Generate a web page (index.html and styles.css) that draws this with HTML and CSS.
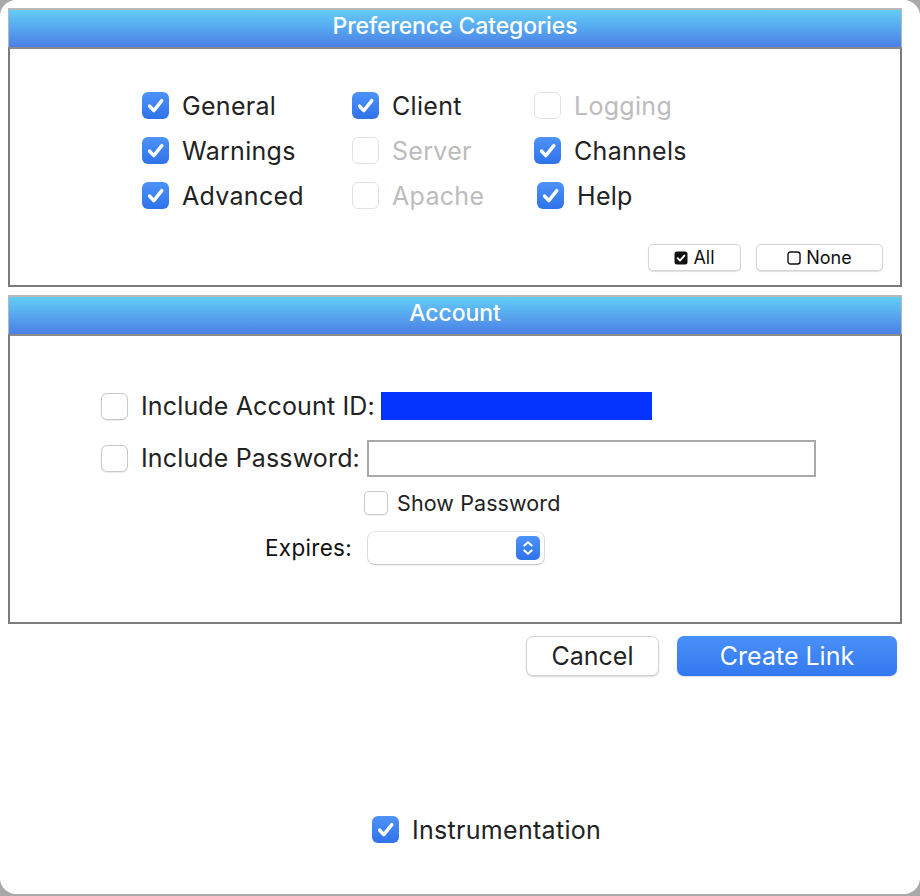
FILE: index.html
```html
<!DOCTYPE html>
<html>
<head>
<meta charset="utf-8">
<link rel="stylesheet" href="styles.css">
</head>
<body>
<div class="window">
  <section class="panel panel-prefs">
    <div class="panel-head">Preference Categories</div>
    <div class="panel-body prefs-body">
      <div class="cat-grid">
        <label class="cb"><span class="box on"><svg viewBox="0 0 27 27"><path d="M7.5 14 L11.8 18.6 L19.8 8.6"/></svg></span>General</label>
        <label class="cb"><span class="box on"><svg viewBox="0 0 27 27"><path d="M7.5 14 L11.8 18.6 L19.8 8.6"/></svg></span>Client</label>
        <label class="cb dis"><span class="box off"></span>Logging</label>
        <label class="cb"><span class="box on"><svg viewBox="0 0 27 27"><path d="M7.5 14 L11.8 18.6 L19.8 8.6"/></svg></span>Warnings</label>
        <label class="cb dis"><span class="box off"></span>Server</label>
        <label class="cb"><span class="box on"><svg viewBox="0 0 27 27"><path d="M7.5 14 L11.8 18.6 L19.8 8.6"/></svg></span>Channels</label>
        <label class="cb"><span class="box on"><svg viewBox="0 0 27 27"><path d="M7.5 14 L11.8 18.6 L19.8 8.6"/></svg></span>Advanced</label>
        <label class="cb dis"><span class="box off"></span>Apache</label>
        <label class="cb shift"><span class="box on"><svg viewBox="0 0 27 27"><path d="M7.5 14 L11.8 18.6 L19.8 8.6"/></svg></span>Help</label>
      </div>
      <div class="sel-buttons">
        <button class="small-btn btn-all"><svg class="mini" viewBox="0 0 14 14"><rect x="0.5" y="0.5" width="13" height="13" rx="2.5" fill="#111"/><path d="M3.6 7.2 L6 9.6 L10.4 4.6" fill="none" stroke="#fff" stroke-width="1.9" stroke-linecap="round" stroke-linejoin="round"/></svg>All</button>
        <button class="small-btn btn-none"><svg class="mini" viewBox="0 0 14 14"><rect x="1" y="1" width="12" height="12" rx="2.5" fill="none" stroke="#111" stroke-width="1.4"/></svg>None</button>
      </div>
    </div>
  </section>

  <section class="panel panel-account">
    <div class="panel-head">Account</div>
    <div class="panel-body account-body">
      <div class="row row-id">
        <span class="box off2"></span>
        <span class="acc-label">Include Account ID:</span>
        <span class="id-field"></span>
      </div>
      <div class="row row-pw">
        <span class="box off2"></span>
        <span class="acc-label">Include Password:</span>
        <span class="pw-field"></span>
      </div>
      <div class="row row-show">
        <span class="box small off2"></span>
        <span class="show-label">Show Password</span>
      </div>
      <div class="row row-exp">
        <span class="exp-label">Expires:</span>
        <span class="select">
          <span class="stepper"><svg viewBox="0 0 24 24"><path d="M8.3 9.6 L12 6.2 L15.7 9.6 M8.3 14.4 L12 17.8 L15.7 14.4" fill="none" stroke="#fff" stroke-width="2" stroke-linecap="round" stroke-linejoin="round"/></svg></span>
        </span>
      </div>
    </div>
  </section>

  <div class="actions">
    <button class="btn btn-cancel">Cancel</button>
    <button class="btn btn-primary">Create Link</button>
  </div>

  <div class="instr">
    <label class="cb"><span class="box on"><svg viewBox="0 0 27 27"><path d="M7.5 14 L11.8 18.6 L19.8 8.6"/></svg></span>Instrumentation</label>
  </div>
</div>
</body>
</html>
```

FILE: styles.css
```css
html, body {
  margin: 0;
  padding: 0;
  background: #a9a9a9;
}
body {
  width: 920px;
  height: 896px;
  overflow: hidden;
  font-family: Inter, "Liberation Sans", sans-serif;
  color: #222;
}
.window {
  width: 920px;
  height: 894px;
  background: #fff;
  border-radius: 16px;
  padding-top: 8px;
  box-sizing: border-box;
  display: flex;
  flex-direction: column;
}
.panel {
  margin-left: 8px;
  width: 894px;
  box-sizing: border-box;
}
.panel-head {
  height: 39px;
  box-sizing: border-box;
  border-top: 2px solid #b8b8b8;
  border-left: 1px solid #b8b8b8;
  border-right: 1px solid #b8b8b8;
  background: linear-gradient(#62cdf8, #4b7fe6);
  color: #fff;
  font-size: 23px;
  font-weight: 500;
  text-align: center;
  line-height: 33px;
  letter-spacing: -0.1px;
}
.panel-body {
  border: 2px solid #7c7c7c;
  border-top: 2px solid #8a8a8a;
  background: #fff;
}
.prefs-body {
  height: 240px;
  box-sizing: border-box;
  padding-top: 43px;
  position: relative;
}
.cat-grid {
  display: grid;
  grid-template-columns: 210px 182px 200px;
  grid-auto-rows: 45px;
  margin-left: 132px;
}
.cb {
  display: flex;
  align-items: center;
  gap: 13px;
  font-size: 25px;
  letter-spacing: 0.3px;
  height: 27px;
  color: #222;
}
.cb.dis { color: #bcbcbc; }
.cb.shift { margin-left: 3px; }
.box {
  width: 27px;
  height: 27px;
  border-radius: 6px;
  box-sizing: border-box;
  flex: none;
  display: inline-block;
}
.box svg { width: 27px; height: 27px; display: block; }
.box svg path {
  fill: none;
  stroke: #fff;
  stroke-width: 3.4;
  stroke-linecap: round;
  stroke-linejoin: round;
}
.box.on {
  background: linear-gradient(#4d93f8, #2f72ea);
}
.box.off {
  border: 1px solid #e2e2e2;
  background: #fff;
}
.box.off2 {
  border: 1px solid #c9c9c9;
  background: #fff;
  box-shadow: 0 0.5px 1px rgba(0,0,0,0.08);
}
.box.small {
  width: 24px;
  height: 24px;
  border-radius: 5px;
}
.sel-buttons {
  position: absolute;
  right: 17px;
  bottom: 14px;
  display: flex;
  gap: 15px;
}
.small-btn {
  height: 27px;
  box-sizing: border-box;
  border: 1px solid #d4d4d4;
  border-radius: 5px;
  background: #fff;
  box-shadow: 0 1px 1px rgba(0,0,0,0.12);
  font-family: Inter, "Liberation Sans", sans-serif;
  font-size: 18px;
  color: #111;
  display: flex;
  align-items: center;
  justify-content: center;
  gap: 5px;
  padding: 0;
}
.btn-all { width: 93px; }
.btn-none { width: 127px; }
.mini { width: 14px; height: 14px; }

.panel-account { margin-top: 8px; }
.account-body {
  height: 290px;
  box-sizing: border-box;
  padding-top: 55px;
}
.row {
  display: flex;
  align-items: center;
}
.acc-label { font-size: 25px; letter-spacing: 0.15px; color: #222; }
.row-id { margin-left: 91px; height: 30px; }
.row-id .acc-label { margin-left: 13px; }
.id-field {
  width: 271px;
  height: 28px;
  background: #0433ff;
  margin-left: 6px;
}
.row-pw { margin-left: 91px; margin-top: 18px; height: 38px; }
.row-pw .acc-label { margin-left: 13px; }
.pw-field {
  width: 449px;
  height: 37px;
  box-sizing: border-box;
  border: 2px solid #a9a9a9;
  margin-left: 7px;
  background: #fff;
}
.row-show { margin-left: 354px; margin-top: 13px; height: 26px; }
.show-label { font-size: 21.5px; letter-spacing: 0.1px; margin-left: 9px; color: #222; }
.row-exp { margin-left: 255px; margin-top: 15px; height: 33px; }
.exp-label { font-size: 22.5px; letter-spacing: 0.3px; width: 98px; color: #111; }
.select {
  margin-left: 5px;
  width: 176px;
  height: 32px;
  box-sizing: border-box;
  border-radius: 6px;
  background: #fff;
  box-shadow: 0 0 0 0.5px rgba(0,0,0,0.18), 0 1px 2px rgba(0,0,0,0.18);
  display: flex;
  align-items: center;
  justify-content: flex-end;
  padding-right: 4px;
}
.stepper {
  width: 24px;
  height: 24px;
  border-radius: 5px;
  background: linear-gradient(#4d93f8, #2f72ea);
}
.stepper svg { width: 24px; height: 24px; display: block; }

.actions {
  display: flex;
  justify-content: flex-end;
  gap: 18px;
  margin-top: 12px;
  padding-right: 23px;
}
.btn {
  height: 40px;
  box-sizing: border-box;
  border-radius: 7px;
  font-family: Inter, "Liberation Sans", sans-serif;
  font-size: 25px;
  padding: 0;
}
.btn-cancel {
  width: 133px;
  background: #fff;
  border: 1px solid #d2d2d2;
  box-shadow: 0 1px 1.5px rgba(0,0,0,0.15);
  color: #222;
}
.btn-primary {
  width: 220px;
  border: none;
  background: linear-gradient(#4a90f8, #3478f0);
  color: #fff;
  box-shadow: 0 1px 1.5px rgba(0,0,0,0.15);
}
.instr {
  margin-top: 140px;
  margin-left: 372px;
}
```
